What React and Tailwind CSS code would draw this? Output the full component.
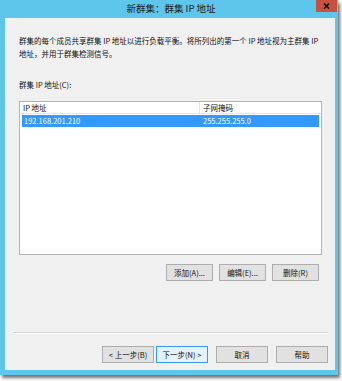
export default function App() {
  const font = { fontFamily: '"Noto Sans CJK SC", "Liberation Sans", sans-serif' }
  return (
    <div className="w-[342px] h-[381px] bg-white overflow-hidden" style={font}>
      <div className="w-[338px] h-[375px] bg-[#5dc6ea] flex flex-col shadow-[2px_3px_3px_rgba(0,0,0,0.55)]">
        {/* title bar */}
        <div className="relative h-[18px] flex items-center justify-center shrink-0">
          <span className="text-[9.5px] leading-none text-[#1b1b1b] pl-[4px]">新群集：群集 IP 地址</span>
          <div className="absolute right-[1px] top-0 w-[21px] h-[12px] bg-[#c7503f] flex items-center justify-center">
            <svg width="7" height="6" viewBox="0 0 7 6">
              <path d="M1 0.5 L6 5.5 M6 0.5 L1 5.5" stroke="#111" strokeWidth="1.6" />
            </svg>
          </div>
        </div>

        {/* client area */}
        <div className="flex-1 ml-[5px] mr-[3px] mb-[5px] bg-[#f0f0f0] border-l border-[#f8f8f8] flex flex-col text-[#111]">
          <div className="pl-[13px] pr-[4px] pt-[16px] text-[7.5px] leading-[13px] whitespace-nowrap">
            <p>群集的每个成员共享群集 IP 地址以进行负载平衡。将所列出的第一个 IP 地址视为主群集 IP</p>
            <p>地址，并用于群集检测信号。</p>
            <p className="mt-[18px]">群集 IP 地址(C):</p>
          </div>

          {/* list */}
          <div className="ml-[13px] mr-[13px] mt-[10px] h-[154px] bg-white border border-[#b4b4b4] text-[7.5px] leading-none">
            <div className="flex h-[12px] border-b border-[#e5e5e5]">
              <div className="w-[180px] border-r border-[#e5e5e5] pl-[3px] flex items-center">IP 地址</div>
              <div className="flex-1 pl-[3px] flex items-center">子网掩码</div>
            </div>
            <div className="flex h-[12px] mx-[2px] mt-[1px] bg-[#3399ff] text-white">
              <div className="w-[179px] pl-[2px] flex items-center">192.168.201.210</div>
              <div className="flex-1 pl-[2px] flex items-center">255.255.255.0</div>
            </div>
          </div>

          {/* list buttons */}
          <div className="flex justify-end gap-[6px] mr-[16px] mt-[9px] text-[7.5px]">
            <button className="w-[47px] h-[17px] bg-[#e1e1e1] border border-[#adadad] leading-none">添加(A)...</button>
            <button className="w-[47px] h-[17px] bg-[#e1e1e1] border border-[#adadad] leading-none">编辑(E)...</button>
            <button className="w-[47px] h-[17px] bg-[#e1e1e1] border border-[#adadad] leading-none">删除(R)</button>
          </div>

          <div className="flex-1" />

          {/* separator */}
          <div className="mx-[7px] h-[2px] border-t border-[#dadada] border-b border-b-white" />

          {/* wizard buttons */}
          <div className="flex justify-end mr-[7px] mt-[12px] mb-[7px] text-[7.5px]">
            <button className="w-[52px] h-[17px] bg-[#e1e1e1] border border-[#adadad] leading-none">&lt; 上一步(B)</button>
            <button className="ml-[2px] w-[52px] h-[17px] bg-[#e5f1fb] border border-[#3399ff] leading-none">下一步(N) &gt;</button>
            <button className="ml-[8px] w-[52px] h-[17px] bg-[#e1e1e1] border border-[#adadad] leading-none">取消</button>
            <button className="ml-[8px] w-[52px] h-[17px] bg-[#e1e1e1] border border-[#adadad] leading-none">帮助</button>
          </div>
        </div>
      </div>
    </div>
  )
}
